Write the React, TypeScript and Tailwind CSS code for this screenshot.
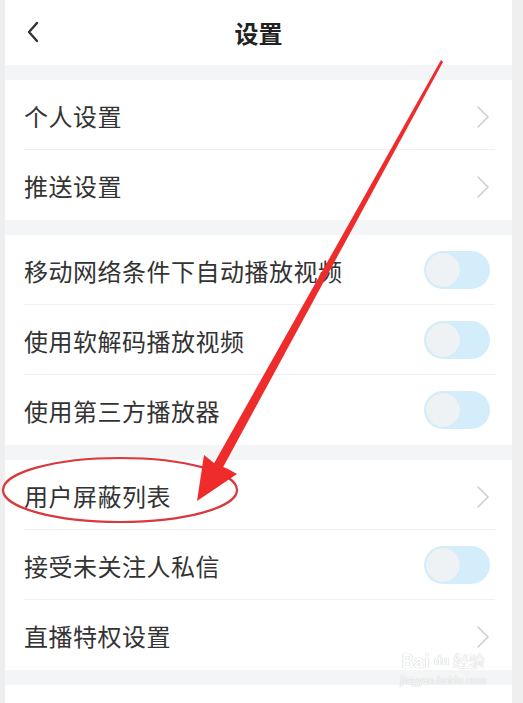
import React from "react";

const Chevron = () => (
  <svg width="14" height="24" viewBox="0 0 14 24" fill="none">
    <path d="M2 2 L12 12 L2 22" stroke="#cfcfcf" strokeWidth="1.6" strokeLinecap="round" strokeLinejoin="round" />
  </svg>
);

const Toggle = () => (
  <div className="w-[66px] h-[38px] rounded-full bg-[#d3edfb] relative flex items-center pl-[2px]">
    <div className="w-[34px] h-[34px] rounded-full bg-[#eef2f5] shadow-[0_0_1px_rgba(0,0,0,0.05)]" />
  </div>
);

type Item = { label: string; kind: "arrow" | "toggle"; last?: boolean };

const Row = ({ label, kind, last }: Item) => (
  <div className="h-[70px] pl-[19px] pr-[22px] flex items-center relative bg-white">
    <span className="flex-1 text-[24px] text-[#333] tracking-[0.5px] pt-[2px]">{label}</span>
    {kind === "arrow" ? (
      <div className="pt-[4px]"><Chevron /></div>
    ) : (
      <Toggle />
    )}
    {!last && <div className="absolute left-[19px] right-[17px] bottom-0 h-px bg-[#f1f1f1]" />}
  </div>
);

const Gap = () => <div className="h-[15px] bg-[#f4f5f6]" />;

export default function App() {
  const groups: Item[][] = [
    [
      { label: "个人设置", kind: "arrow" },
      { label: "推送设置", kind: "arrow", last: true },
    ],
    [
      { label: "移动网络条件下自动播放视频", kind: "toggle" },
      { label: "使用软解码播放视频", kind: "toggle" },
      { label: "使用第三方播放器", kind: "toggle", last: true },
    ],
    [
      { label: "用户屏蔽列表", kind: "arrow" },
      { label: "接受未关注人私信", kind: "toggle" },
      { label: "直播特权设置", kind: "arrow", last: true },
    ],
  ];
  return (
    <div
      className="w-[523px] h-[703px] overflow-hidden flex bg-[#efefef] relative"
      style={{ fontFamily: '"Noto Sans CJK SC", "Noto Sans", sans-serif' }}
    >
      <div className="w-[5px] bg-[#eeeeee]" />
      <div className="w-[507px] flex flex-col bg-white">
        <div className="h-[65px] flex items-center relative bg-white">
          <div className="absolute left-[20px] top-[20px]">
            <svg width="16" height="24" viewBox="0 0 16 24" fill="none">
              <path d="M12 3 L4 12 L12 21" stroke="#333" strokeWidth="2.4" strokeLinecap="round" strokeLinejoin="round" />
            </svg>
          </div>
          <div className="flex-1 text-center text-[24px] font-bold text-[#222]">设置</div>
        </div>
        {groups.map((g, i) => (
          <React.Fragment key={i}>
            <Gap />
            {g.map((it) => (
              <Row key={it.label} {...it} />
            ))}
          </React.Fragment>
        ))}
        <Gap />
        <div className="flex-1 bg-white" />
      </div>
      <div className="flex-1 bg-[#efefef]" />

      {/* Baidu watermark */}
      <div className="absolute left-[400px] top-[650px] flex flex-col items-center text-white pointer-events-none">
        <div className="flex items-center gap-[4px] leading-[20px] h-[20px]" style={{ textShadow: "0 0 1px #aaa" }}>
          <span className="text-[18px] font-bold">Bai</span>
          <span className="text-[12px] font-bold">du</span>
          <span className="text-[16px]">经验</span>
        </div>
        <div className="text-[10px] leading-[12px] mt-[4px]" style={{ textShadow: "0 0 1px #aaa" }}>jingyan.baidu.com</div>
      </div>

      {/* annotation overlay */}
      <svg className="absolute left-0 top-0 pointer-events-none" width="523" height="703" viewBox="0 0 523 703">
        <ellipse cx="120" cy="490" rx="117" ry="32" fill="none" stroke="#d9393b" strokeWidth="2.2" />
        <polygon points="441,60 443,62 221,471 212,467" fill="#ee2c2c" />
        <polygon points="197,501 204,455 214,463 228,469 237,474" fill="#ee2c2c" />
      </svg>
    </div>
  );
}
